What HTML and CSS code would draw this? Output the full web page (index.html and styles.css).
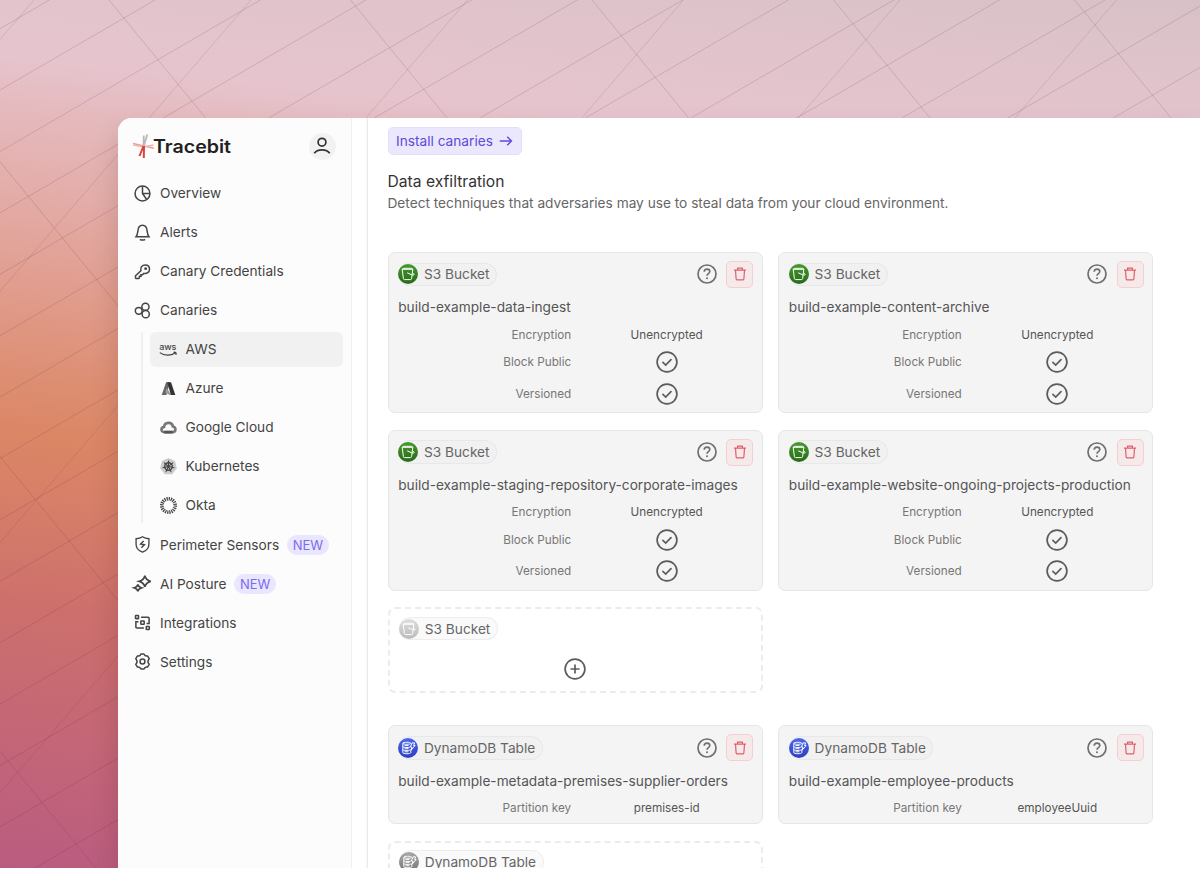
FILE: index.html
```
<!DOCTYPE html>
<html lang="en">
<head>
  <meta charset="UTF-8" />
  <title>Tracebit</title>
  <link rel="stylesheet" href="styles.css">
</head>
<body>
  <svg class="defs" width="0" height="0">
    <symbol id="help" viewBox="0 0 20 20"><circle cx="10" cy="10" r="9" stroke-width="1.7"/><path d="M7.2 7.8c0-1.6 1.2-2.7 2.8-2.7s2.8 1.1 2.8 2.5c0 2-2.8 2.1-2.8 4.2" stroke-width="1.6"/><circle cx="10" cy="14.3" r="1" fill="currentColor" stroke="none"/></symbol>
    <symbol id="trash" viewBox="0 0 14 14"><path d="M1 3.2h12M4.6 3V1.1h4.8V3M2.5 3.4l.6 8.4c.1.7.5 1 1.1 1h5.6c.6 0 1-.3 1.1-1l.6-8.4"/></symbol>
    <symbol id="check" viewBox="0 0 22 22"><circle cx="11" cy="11" r="9.9"/><path d="M6.9 11.400l2.800 2.600 5.300-5.400" stroke-linecap="round"/></symbol>
    <symbol id="plus" viewBox="0 0 22 22"><circle cx="11" cy="11" r="9.9"/><path d="M11 6.5v9M6.5 11h9"/></symbol>
    <symbol id="bucket" viewBox="0 0 20 20"><path d="M4.2 5.3h10.6M4.2 5.3l1.200 9.300c.1.700.5 1 1.100 1h6c.6 0 1-.3 1.100-1l1.200-9.300c-.2-.7-.7-1-1.400-1H5.6c-.7 0-1.200.3-1.400 1zM9.200 8.800l4.500 2c1.300.5 2.500.4 2.500-.3s-1-1.300-2-1.800"/></symbol>
    <symbol id="table" viewBox="0 0 20 20"><path d="M4.8 5.3c0-1.400 8-1.400 8 0M4.8 5.3v9.300c0 1.500 8 1.500 8 0v-2.300M4.8 5.3c0 1.300 8 1.300 8 0M4.8 8.500c0 1.200 5.500 1.300 7.200.6M4.8 11.500c0 1.200 5.500 1.300 8 .3M6.500 7.600h4M6.500 10.700h4M6.500 13.800h4"/><path d="M14 4.900h2.600l-1 2.600h1.500l-4.100 4.800.9-3.300h-1.500z"/></symbol>
  </svg>

  <div class="stage">
    <svg class="lines" width="1200" height="868" viewBox="0 0 1200 868">
      <path d="M0 28.7l1200-698M0 90.1l1200-698M0 151.5l1200-698M0 212.9l1200-698M0 274.3l1200-698M0 335.7l1200-698M0 397.1l1200-698M0 458.5l1200-698M0 519.9l1200-698M0 581.3l1200-698M0 642.7l1200-698M0 704.1l1200-698M0 765.5l1200-698M0 826.9l1200-698M0 888.3l1200-698"/>
      <path d="M-615.5 0l712 869M-374 0l712 869M-132.5 0l712 869M109 0l712 869M350.5 0l712 869M592 0l712 869M833.5 0l712 869M1074.5 0l712 869"/>
      <path opacity=".8" d="M34 0l-749 869M251 0l-749 869M467.5 0l-749 869M683.5 0l-749 869M900 0l-749 869M1116.5 0l-749 869"/>
    </svg>

    <div class="window">
      <aside class="sidebar">
        <div class="brand-row">
          <div class="brand">
            <svg width="21" height="24" viewBox="0 0 21 24">
              <path d="M10.8 1.5l-.3 10M14.3.5l-3.300 11" stroke="#b9b9b9" stroke-width="1.8"/>
              <path d="M0 9.5l21 4.700" stroke="#eba19b" stroke-width="1.5"/>
              <path d="M0 11l10.500 2 10-2" stroke="#f0b5ae" stroke-width="1.3"/>
              <path d="M10.5 12l-4 10M11 12l-.2 12" stroke="#d8453f" stroke-width="2"/>
            </svg>
            <span class="brand-name">Tracebit</span>
          </div>
          <div class="avatar">
            <svg width="18" height="18" viewBox="0 0 18 18"><circle cx="9" cy="5.2" r="3.9"/><path d="M1.3 16.3c3-4.700 12.400-4.700 15.400 0"/></svg>
          </div>
        </div>

        <nav class="nav">
          <a class="item"><svg class="icon" viewBox="0 0 18 18"><circle cx="9" cy="9" r="7.9"/><path d="M9 1.4V9h7.600M9 9l4.500 6.300"/></svg>Overview</a>
          <a class="item"><svg class="icon" viewBox="0 0 18 18"><path d="M2.2 13.400h13.600c-1.400-1.700-1.600-3.200-1.900-6C13.6 3.900 12 1.300 9 1.300S4.400 3.900 4.1 7.400c-.3 2.800-.5 4.300-1.900 6z"/><path d="M6.3 16.200c1.300 1 4.100 1 5.400 0"/></svg>Alerts</a>
          <a class="item"><svg class="icon" viewBox="0 0 18 18"><path d="M7.3 8.200c-.8-3.300 1.300-6.200 4.600-6.200 2.700 0 4.500 1.900 4.500 4.500 0 3.300-2.900 5.200-6 4.500L9 12.400H7.400v1.700H5.700v1.700l-.8.7H2.200l-.6-.6v-2.400z"/><circle cx="12.3" cy="6" r=".7"/></svg>Canary Credentials</a>
          <a class="item"><svg class="icon" viewBox="0 0 18 18"><circle cx="12.1" cy="5" r="3.8"/><circle cx="5" cy="9.3" r="3.6"/><circle cx="12.4" cy="12.9" r="3.8"/></svg>Canaries</a>
          <div class="subnav">
            <a class="item active"><svg class="icon" viewBox="0 0 18 18"><text class="aws" x="-.8" y="9">aws</text><path d="M-.2 12.300c4.700 3.600 11.800 3.500 16.300.4M14.300 12c1.900-.4 3.500-.2 2.500 2.700" stroke-width="1.3"/></svg>AWS</a>
            <a class="item"><svg class="icon solid" viewBox="0 0 18 18"><path d="M6.500 2.300h4L6.800 15.800H1.800z" fill="#666"/><path d="M7 8.500l-1.600 4.800 5 2.500h2z" fill="#999"/><path d="M7.600 2.300h4.100l4.500 13.500h-4.600z" fill="#333"/></svg>Azure</a>
            <a class="item"><svg class="icon" viewBox="0 0 18 18"><path d="M4.600 13.900C.4 13.900.8 8.700 4.300 8.300 5 3 12.800 2.700 13.600 7.900c3.800.8 3.500 6-.3 6z" stroke="#777" stroke-width="2.8"/><path d="M4.500 13.900h8.700" stroke="#555" stroke-width="2.8"/></svg>Google Cloud</a>
            <a class="item"><svg class="icon" viewBox="0 0 18 18"><path d="M9 0l7 3.300 1.800 7.500-4.800 6.400H5L.2 10.800 2 3.300z" fill="#ccc" stroke="none"/><circle cx="9" cy="9" r="4" stroke-width="1.4"/><path d="M9 2.700V9l4.800-4M9 9l6.200 1.300M9 9l2.800 5.800M9 9l-2.800 5.800M9 9l-6.200 1.300M9 9L4.200 5" stroke-width="1.1"/></svg>Kubernetes</a>
            <a class="item"><svg class="icon" viewBox="0 0 18 18"><circle cx="9" cy="9" r="7.100" stroke-width="3.800" stroke-dasharray="1.3 .928"/></svg>Okta</a>
          </div>
          <a class="item"><svg class="icon" viewBox="0 0 18 18"><path d="M9 .8c2 1.400 4.200 2 6.800 2.100v5.800c0 3.800-2.800 6.900-6.800 8.400-4-1.500-6.800-4.600-6.800-8.400V2.900C4.800 2.800 7 2.200 9 .8z" stroke-width="1.4"/><path d="M10.2 5.300L7 8.500l4 .8-3.200 3.200" stroke-width="1.5"/></svg>Perimeter Sensors<span class="new">NEW</span></a>
          <a class="item"><svg class="icon" viewBox="0 0 18 18"><path d="M11.500 .8c.8 3.400 2.100 4.900 6.200 5.900-4.100 1-5.400 2.500-6.200 5.900-.8-3.400-2.100-4.900-5.900-5.900 3.800-1 5.100-2.500 5.900-5.900zM4.100 10c.5 2 1.300 3 3.600 3.600-2.300.6-3.100 1.600-3.600 3.600-.5-2-1.300-3-3.600-3.600C2.800 13 3.600 12 4.100 10z" stroke-width="1.800"/></svg>AI Posture<span class="new">NEW</span></a>
          <a class="item"><svg class="icon" viewBox="0 0 18 18"><rect x="1.6" y="1.700" width="3.2" height="3.2" rx=".5"/><rect x="7.2" y="7.3" width="3.6" height="3.6" rx=".5"/><rect x="13" y="13.2" width="3.2" height="3.2" rx=".5"/><path d="M7.500 3.400h7.400c.7 0 1.100.4 1.100 1.100v5.600h-2.700M10.500 14.800H3.100c-.7 0-1.100-.4-1.100-1.100V8.100h2.700"/></svg>Integrations</a>
          <a class="item"><svg class="icon" viewBox="0 0 18 18"><circle cx="9" cy="9" r="2.6"/><path d="M7.400 1h3.200c.7 1.900 1.700 2.500 3.700 2.100l1.800 2.900c-1.500 1.700-1.500 4.300 0 6l-1.800 2.900c-2-.4-3 .2-3.700 2.100H7.400c-.7-1.900-1.700-2.500-3.700-2.100L1.900 12c1.500-1.700 1.500-4.300 0-6l1.800-2.900c2 .4 3-.2 3.700-2.100z" stroke-linejoin="round"/></svg>Settings</a>
        </nav>
      </aside>

      <main class="main">
        <a class="install">Install canaries
          <svg width="14" height="12" viewBox="0 0 14 12"><path d="M.8 6h11.500M8.200 1.700L12.500 6l-4.300 4.300"/></svg>
        </a>
        <h2>Data exfiltration</h2>
        <p class="lead">Detect techniques that adversaries may use to steal data from your cloud environment.</p>

        <div class="cards">
          <section class="card">
            <header><span class="tag"><svg class="green"><use href="#bucket"/></svg>S3 Bucket</span><svg class="help"><use href="#help"/></svg><button class="trash"><svg><use href="#trash"/></svg></button></header>
            <h3>build-example-data-ingest</h3>
            <dl>
              <dt>Encryption</dt><dd>Unencrypted</dd>
              <dt class="tall">Block Public</dt><dd class="tall"><svg><use href="#check"/></svg></dd>
              <dt class="tall">Versioned</dt><dd class="tall"><svg><use href="#check"/></svg></dd>
            </dl>
          </section>
          <section class="card">
            <header><span class="tag"><svg class="green"><use href="#bucket"/></svg>S3 Bucket</span><svg class="help"><use href="#help"/></svg><button class="trash"><svg><use href="#trash"/></svg></button></header>
            <h3>build-example-content-archive</h3>
            <dl>
              <dt>Encryption</dt><dd>Unencrypted</dd>
              <dt class="tall">Block Public</dt><dd class="tall"><svg><use href="#check"/></svg></dd>
              <dt class="tall">Versioned</dt><dd class="tall"><svg><use href="#check"/></svg></dd>
            </dl>
          </section>
          <section class="card">
            <header><span class="tag"><svg class="green"><use href="#bucket"/></svg>S3 Bucket</span><svg class="help"><use href="#help"/></svg><button class="trash"><svg><use href="#trash"/></svg></button></header>
            <h3>build-example-staging-repository-corporate-images</h3>
            <dl>
              <dt>Encryption</dt><dd>Unencrypted</dd>
              <dt class="tall">Block Public</dt><dd class="tall"><svg><use href="#check"/></svg></dd>
              <dt class="tall">Versioned</dt><dd class="tall"><svg><use href="#check"/></svg></dd>
            </dl>
          </section>
          <section class="card">
            <header><span class="tag"><svg class="green"><use href="#bucket"/></svg>S3 Bucket</span><svg class="help"><use href="#help"/></svg><button class="trash"><svg><use href="#trash"/></svg></button></header>
            <h3>build-example-website-ongoing-projects-production</h3>
            <dl>
              <dt>Encryption</dt><dd>Unencrypted</dd>
              <dt class="tall">Block Public</dt><dd class="tall"><svg><use href="#check"/></svg></dd>
              <dt class="tall">Versioned</dt><dd class="tall"><svg><use href="#check"/></svg></dd>
            </dl>
          </section>
          <section class="card empty">
            <span class="tag"><svg class="gray-light"><use href="#bucket"/></svg>S3 Bucket</span>
            <svg class="plus"><use href="#plus"/></svg>
          </section>
        </div>

        <div class="cards">
          <section class="card">
            <header><span class="tag"><svg class="blue"><use href="#table"/></svg>DynamoDB Table</span><svg class="help"><use href="#help"/></svg><button class="trash"><svg><use href="#trash"/></svg></button></header>
            <h3>build-example-metadata-premises-supplier-orders</h3>
            <dl><dt>Partition key</dt><dd>premises-id</dd></dl>
          </section>
          <section class="card">
            <header><span class="tag"><svg class="blue"><use href="#table"/></svg>DynamoDB Table</span><svg class="help"><use href="#help"/></svg><button class="trash"><svg><use href="#trash"/></svg></button></header>
            <h3>build-example-employee-products</h3>
            <dl><dt>Partition key</dt><dd>employeeUuid</dd></dl>
          </section>
          <section class="card empty">
            <span class="tag"><svg class="gray"><use href="#table"/></svg>DynamoDB Table</span>
          </section>
        </div>
      </main>
    </div>
  </div>
</body>
</html>
```
FILE: styles.css
```
* { box-sizing: border-box; }
html, body { margin: 0; height: 869px; overflow: hidden; background: #fff; }
body { font-family: Inter, "Liberation Sans", sans-serif; font-size: 13.68px; color: #444; }
svg { fill: none; stroke: currentColor; flex: none; display: block; }
.defs { position: absolute; }

/* backdrop */
.stage {
  position: relative;
  height: 868px;
  overflow: hidden;
  padding: 117.5px 0 0 117.5px;
  background: linear-gradient(186deg, #d7c1c6 0, #dfc3cb 70px, #e6c4ce 180px, #e5bbbf 225px, #e3aba6 324px, #e19e90 400px, #dd8e72 500px, #db8665 555px, #d88068 610px, #cd706c 722px, #c36578 871px, #b95c80 990px);
}
.lines { position: absolute; left: 0; top: 0; stroke: rgba(90, 40, 60, .16); stroke-width: 1; }

.window {
  position: relative;
  display: flex;
  height: 900px;
  background: #fff;
  border-radius: 14px 0 0 0;
  box-shadow: 0 16px 28px rgba(60, 20, 20, .17);
  overflow: hidden;
}

/* sidebar */
.sidebar { width: 234px; flex: none; background: #fcfcfc; border-right: 1px solid #f0f0f0; padding: 15.5px 7.5px 0 7px; }
.brand-row { display: flex; align-items: center; justify-content: space-between; height: 26px; padding: 0 7.5px 0 8.5px; }
.brand { display: flex; align-items: center; }
.brand-name { font-size: 18px; font-weight: 600; color: #222; margin-left: -1.5px; transform: scaleX(1.09); transform-origin: left; }
.avatar { width: 27px; height: 27px; border-radius: 50%; background: #f2f2f2; display: flex; align-items: center; justify-content: center; color: #333; stroke-width: 1.7; }
.nav { display: flex; flex-direction: column; gap: 4.06px; padding-top: 16.6px; }
.item { display: flex; align-items: center; height: 35px; padding-left: 9.5px; border-radius: 6px; color: #444; white-space: nowrap; }
.icon { width: 17px; height: 17px; margin-right: 9px; stroke-width: 1.6; overflow: visible; }
.solid { stroke: none; }
.aws { font-size: 9.5px; font-weight: 500; fill: currentColor; stroke: none; letter-spacing: -.2px; }
.subnav { display: flex; flex-direction: column; gap: 4.06px; margin-left: 16px; padding-left: 7.5px; border-left: 2px solid #f0f0f0; }
.subnav .item { padding-left: 9.5px; }
.active { background: #f1f1f1; }
.new { margin-left: 8px; height: 20px; line-height: 20px; padding: 0 5.5px; border-radius: 10px; background: #e9e6fd; color: #7a6cf0; font-size: 13px; }

/* content */
.main { flex: 1; margin-left: 15.5px; border-left: 1px solid #e9e9e9; box-shadow: -1px 0 2px rgba(0, 0, 0, .04); padding: 9px 46px 0 19.5px; }
.install { display: inline-flex; align-items: center; gap: 6.5px; height: 28px; padding: 0 7.5px; border: 1px solid #e2defc; border-radius: 5px; background: #ebe8fe; color: #5b4bd6; stroke-width: 1.3; }
h2 { margin: 15.5px 0 0; font-size: 15.65px; line-height: 23px; font-weight: 400; color: #333; }
.lead { margin: 1px 0 0; line-height: 18px; color: #666; }
.cards { display: grid; grid-template-columns: 375px 375px; gap: 16.3px 15.6px; margin-top: 32px; }
.lead + .cards { margin-top: 39.8px; }
.card { height: 161.5px; border: 1px solid #e6e6e6; border-radius: 7px; background: #f4f4f4; padding: 8px 8.5px 0 9.7px; }
.cards:last-child .card { height: 99px; }
.card header { display: flex; align-items: center; height: 27px; }
.tag { display: inline-flex; align-items: center; height: 23.5px; padding-right: 6.5px; border: 1px solid #e8e8e8; border-left: 0; border-radius: 12px; background: #f1f1f1; color: #666; }
.tag svg { width: 20px; height: 20px; margin-right: 5.8px; border-radius: 50%; color: #fff; }
.green { background: linear-gradient(#47992f, #276a17); }
.blue { background: linear-gradient(#4b68f0, #2e3fbd); }
.gray { background: linear-gradient(#a8a8a8, #777); }
.gray-light { background: linear-gradient(#ddd, #bbb); }
.help { width: 20px; height: 20px; margin-left: auto; color: #6f6f6f; }
.trash { width: 27px; height: 27px; margin-left: 9.5px; padding: 0; display: flex; align-items: center; justify-content: center; border: 1px solid #f4cfd2; border-radius: 5px; background: #f6e9ea; color: #e0606a; }
.trash svg { width: 14px; height: 14px; stroke-width: 1.2; }
h3 { margin: 9.5px 0 0; font-size: 13.68px; line-height: 20px; font-weight: 400; color: #555; white-space: nowrap; }
dl { display: grid; grid-template-columns: 173px 171px; column-gap: 10px; margin: 5.3px 0 0; font-size: 11.73px; }
dt, dd { margin: 0; height: 24px; display: flex; align-items: center; }
dt { justify-content: flex-end; color: #777; }
dd { justify-content: center; color: #555; }
.tall { height: 31.3px; }
dd svg, .plus { width: 22px; height: 22px; stroke-width: 1.7; color: #5c5c5c; }
.card.empty { height: 86px; border: 2px dashed #ececec; background: #fff; padding: 7.5px 9.5px 0; }
.cards .empty .tag { background: #fafafa; border-color: #eee; }
.plus { margin: 16.5px auto 0; }
```
